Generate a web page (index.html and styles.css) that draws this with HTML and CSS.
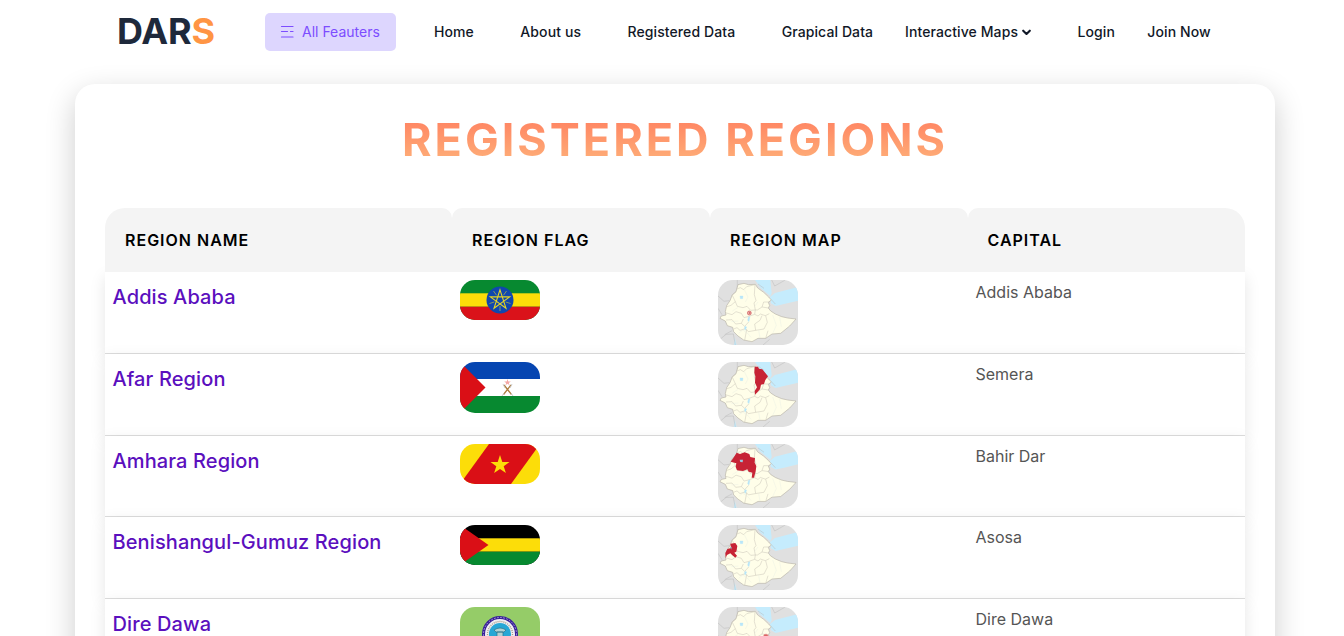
FILE: index.html
```
<!DOCTYPE html>
<html lang="en">
<head>
<meta charset="utf-8">
<title>DARS - Registered Regions</title>
<link rel="stylesheet" href="styles.css">
</head>
<body>
<svg class="defs" aria-hidden="true">
  <symbol id="star" viewBox="-10 -10 20 20"><path d="M0-10 2.3-3.1 9.5-3.1 3.7 1.2 5.9 8.1 0 3.9-5.9 8.1-3.7 1.2-9.5-3.1-2.3-3.1Z"/></symbol>
  <symbol id="map" viewBox="0 0 240 195" preserveAspectRatio="none">
    <rect width="240" height="195" fill="#e0e0e0"/>
    <path d="M111 0H157L161 40 157 48 145 38 126 22ZM156 51 171 39 197 32 240 21V62L198 72 173 78 159 70ZM50 172 56 195H48ZM237 178V195H225Z" fill="#c5ecfd"/>
    <path d="M0 48 18 64 34 62M20 164 42 152M0 183 24 163 46 162 52 195M58 0V38M120 12 138 25M161 0 170 18 202 0M135 195 155 178M161 60 172 72M0 85 12 104" fill="none" stroke="#bbb" stroke-width="1.5"/>
    <path d="M60 14 78 10 91 14 112 13 119 24 137 37 152 51 160 60 151 67 155 77 151 84 158 93 172 102 191 110 209 114 234 117 215 138 188 160 162 162 143 175 120 175 102 185 77 180 60 168 47 155 44 142 28 137 22 123 6 115 10 108 24 105 22 95 26 77 36 62 43 44 54 35Z" fill="#fffee9" stroke="#b3aea2" stroke-width="1.8"/>
    <path d="M54 28 67 23 77 29 86 20 110 14M54 35 43 46 52 65 39 76 27 80M52 65 58 79 75 83 87 79 98 91 112 90 108 69 114 62 109 44 111 14M155 66 137 66 132 81 118 90 112 90M132 81 151 84M112 90 110 103 120 108 127 102 142 107 154 101M22 98 42 104 54 95 70 100 78 113 93 109 110 103M24 120 42 119 53 132 70 130 76 117M47 147 57 143 66 151 83 146 91 155 113 151 110 132 126 121 132 107M143 107 148 127 138 147 113 151M143 175 150 152M86 149 80 181M70 130 80 139 92 126" fill="none" stroke="#c9c5b8" stroke-width="1.5"/>
    <path d="M79 29 90 51 82 66M120 66 111 78M43 93 59 83M164 105 175 136 165 158M62 160 74 150 88 159 99 172M185 111 190 140M126 174 122 151M40 125 61 123" fill="none" stroke="#e2ebe3" stroke-width="1"/>
    <path d="M66 48H75L74 56H67ZM91 111 96 110 93 125 89 121ZM81 139 86 141 82 151 79 145Z" fill="#b8e6f9" stroke="#b8e6f9"/>
  </symbol>
</svg>

<header class="header">
  <a class="logo">DAR<span>S</span></a>
  <button class="features">
    <svg width="14" height="14" viewBox="0 0 14 14"><path d="M1.5 1.5H13M1.5 6.5H7.5M10.5 6.5H13M1.5 12H13" fill="none" stroke="#7c4dff" stroke-width="1.2" stroke-linecap="round"/></svg>
    <span>All Feauters</span>
  </button>
  <nav class="nav">
    <a>Home</a><a>About us</a><a>Registered Data</a><a>Grapical Data</a>
    <a class="menu">Interactive Maps<svg width="9" height="7" viewBox="0 0 9 7"><path d="M1.2 1.7 4.5 5 7.8 1.7" fill="none" stroke="#111827" stroke-width="2.1" stroke-linecap="round" stroke-linejoin="round"/></svg></a>
    <a>Login</a><a class="join">Join Now</a>
  </nav>
</header>

<main class="card">
  <h1 class="title">Registered Regions</h1>
  <section class="table">
    <div class="row head"><div>Region Name</div><div>Region Flag</div><div>Region Map</div><div>Capital</div></div>

    <div class="row">
      <a class="name">Addis Ababa</a>
      <div class="media"><svg class="flag" width="80" height="40" viewBox="0 0 80 40">
        <rect width="80" height="40" fill="#078930"/><rect y="13.3" width="80" height="13.4" fill="#fcdd09"/><rect y="26.7" width="80" height="13.3" fill="#da121a"/>
        <circle cx="40" cy="20" r="13.5" fill="#0f47af"/>
        <path d="M40 9.8 46 28.3 30.3 16.9H49.7L34 28.3Z" fill="none" stroke="#e4d425" stroke-width="1.1"/>
        <path d="M40 26V31M34.3 22 29.5 23.5M45.7 22 50.5 23.5M36.5 15.2 33.5 11M43.5 15.2 46.5 11" stroke="#a8ae4e" stroke-width=".8"/>
      </svg></div>
      <div class="media"><svg class="flag" width="80" height="65" viewBox="0 0 240 195"><use href="#map" width="240" height="195"/><circle cx="94" cy="99" r="6" fill="#f1b1a7" stroke="#cb5960" stroke-width="1.8"/><path d="M91 95 96 98 92 103M96 95V103" fill="none" stroke="#c44453" stroke-width="1.5"/></svg></div>
      <div class="capital">Addis Ababa</div>
    </div>

    <div class="row">
      <a class="name">Afar Region</a>
      <div class="media"><svg class="flag" width="80" height="51" viewBox="0 0 80 51">
        <rect width="80" height="51" fill="#fff"/><rect width="80" height="17" fill="#0645b1"/><rect y="34" width="80" height="17" fill="#078930"/><path d="M0 0 25.5 25.5 0 51Z" fill="#da0f16"/>
        <path d="M44 23 51.5 32.5M51 23 43.5 32.5" stroke="#ad7b3c" stroke-width="1.3"/><path d="M43 22 45 26M52 22 50 26M44 31 42 34M51 31 53 34" fill="none" stroke="#c5c5c5" stroke-width=".9"/><use href="#star" x="44" y="17" width="7" height="7" fill="#f5a6a5"/>
      </svg></div>
      <div class="media"><svg class="flag" width="80" height="65" viewBox="0 0 240 195"><use href="#map" width="240" height="195"/><path d="M110 14 120 14 123 20 133 22 150 43 142 54 138 66 129 68 126 82 118 91 111 98 110 87 117 76 111 62 112 43 109 32Z" fill="#c72335"/></svg></div>
      <div class="capital">Semera</div>
    </div>

    <div class="row">
      <a class="name">Amhara Region</a>
      <div class="media"><svg class="flag" width="80" height="40" viewBox="0 0 80 40"><rect width="80" height="40" fill="#fcdd09"/><path d="M29 0H80L51 40H0Z" fill="#da0f16"/><use href="#star" x="30" y="11" width="20" height="20" fill="#fcdd09"/></svg></div>
      <div class="media"><svg class="flag" width="80" height="64" viewBox="0 0 240 192"><use href="#map" width="240" height="192"/><path d="M56 26 66 30 80 25 94 30 97 39 111 42 110 56 115 66 113 82 108 101 101 101 103 86 92 83 88 76 75 81 57 79 53 68 55 58 38 53 46 42Z" fill="#c72335"/><path d="M65 47H75L74 55 67 54Z" fill="#9bc7df"/></svg></div>
      <div class="capital">Bahir Dar</div>
    </div>

    <div class="row">
      <a class="name">Benishangul-Gumuz Region</a>
      <div class="media"><svg class="flag" width="80" height="40" viewBox="0 0 80 40"><rect width="80" height="40" fill="#000"/><rect y="13.3" width="80" height="13.4" fill="#fcdd09"/><rect y="26.7" width="80" height="13.3" fill="#078930"/><path d="M0 0 28.5 20 0 40Z" fill="#da0f16"/></svg></div>
      <div class="media"><svg class="flag" width="80" height="65" viewBox="0 0 240 195"><use href="#map" width="240" height="195"/><path d="M37 56 52 54 58 63 55 80 49 83 57 92 52 98 43 91 37 85 27 90 23 99 22 84 28 72 39 69Z" fill="#c72335"/><path d="M36 67 41 65 40 74Z" fill="#90b7ca"/></svg></div>
      <div class="capital">Asosa</div>
    </div>

    <div class="row">
      <a class="name">Dire Dawa</a>
      <div class="media"><svg class="flag" width="80" height="53" viewBox="0 0 80 53">
        <rect width="80" height="53" fill="#95cc68"/><circle cx="40" cy="27" r="16.5" fill="#f0edf2" stroke="#38209a" stroke-width="3"/><circle cx="40" cy="27" r="16.5" fill="none" stroke="#b5a4d4" stroke-width="1" stroke-dasharray="1.5 1.6"/><circle cx="40" cy="27" r="12.5" fill="none" stroke="#a69c86" stroke-width="1.3" stroke-dasharray="1 1"/><circle cx="40" cy="27" r="11" fill="#27a7d5"/><path d="M34 23Q40 19 46 23L44 25H36ZM37 25H43V37H37Z" fill="#b1d2d4" stroke="#26738d" stroke-width=".7"/>
      </svg></div>
      <div class="media"><svg class="flag" width="80" height="65" viewBox="0 0 240 195"><use href="#map" width="240" height="195"/><path d="M136 88 139 82 147 82 152 88Z" fill="#d66"/><circle cx="144" cy="89" r="8" fill="none" stroke="#e69b98" stroke-width="1.5"/></svg></div>
      <div class="capital">Dire Dawa</div>
    </div>
  </section>
</main>
</body>
</html>
```
FILE: styles.css
```
* { box-sizing: border-box; }
html { height: 100%; overflow: hidden; }
body {
  margin: 0;
  height: 636px;
  overflow: hidden;
  background: #fff;
  font-family: Inter, "Liberation Sans", sans-serif;
}
.defs { position: absolute; width: 0; height: 0; }

.header { display: flex; align-items: center; height: 64px; padding-left: 117px; }
.logo { width: 148px; padding-bottom: 2px; font-size: 36px; font-weight: 700; line-height: 40px; color: #1e293b; letter-spacing: -0.2px; }
.logo span { color: #ff9544; }
.features {
  display: flex;
  align-items: center;
  gap: 8px;
  width: 131px;
  height: 38px;
  padding: 0 0 0 15px;
  border: 0;
  border-radius: 5px;
  background: #ddd6fe;
  color: #7c4dff;
  font: 400 14px/20px Inter, sans-serif;
  white-space: nowrap;
}
.nav {
  display: flex;
  gap: 46.4px;
  margin-left: 38px;
  color: #111827;
  font-size: 14px;
  font-weight: 500;
  line-height: 20px;
  letter-spacing: .1px;
  white-space: nowrap;
}
.nav .menu { margin-left: -14.5px; }
.nav .menu svg { margin: 0 0 1px 4px; }
.nav .join { margin-left: -14px; }

.card {
  width: 1200px;
  height: 900px;
  margin: 20px 0 0 75px;
  padding: 29px 30px 30px;
  border-radius: 20px;
  background: #fff;
  box-shadow: 0 10px 30px rgba(0, 0, 0, .2);
}
.title {
  margin: 0 0 41px;
  height: 54px;
  font-size: 45px;
  font-weight: 700;
  line-height: 54px;
  letter-spacing: 3px;
  text-align: center;
  text-transform: uppercase;
  white-space: nowrap;
  color: transparent;
  background: linear-gradient(#ff7e5f, #feb47b);
  -webkit-background-clip: text;
  background-clip: text;
}

.row {
  display: grid;
  grid-template-columns: 347px 258px 257.5px 1fr;
  height: 81.8px;
  background: #fff;
  border-bottom: 1px solid #ddd;
  box-shadow: 0 5px 15px rgba(0, 0, 0, .1);
}
.row > * { padding: 8px; }
.head { height: 64px; border: 0; box-shadow: none; }
.head > div {
  padding: 20px;
  border-radius: 10px 10px 0 0;
  background: #f4f4f4;
  color: #000;
  font-size: 16px;
  font-weight: 600;
  line-height: 24px;
  letter-spacing: 1px;
  text-transform: uppercase;
}
.head > div:first-child { border-top-left-radius: 20px; }
.head > div:last-child { border-top-right-radius: 20px; }
.row .name { padding-left: 7.5px; color: #5b0fbe; font-size: 20px; font-weight: 500; line-height: 34px; letter-spacing: .12px; }
.capital { color: #555; font-size: 16px; line-height: 25px; }
.flag { display: block; border-radius: 15px; }
```
